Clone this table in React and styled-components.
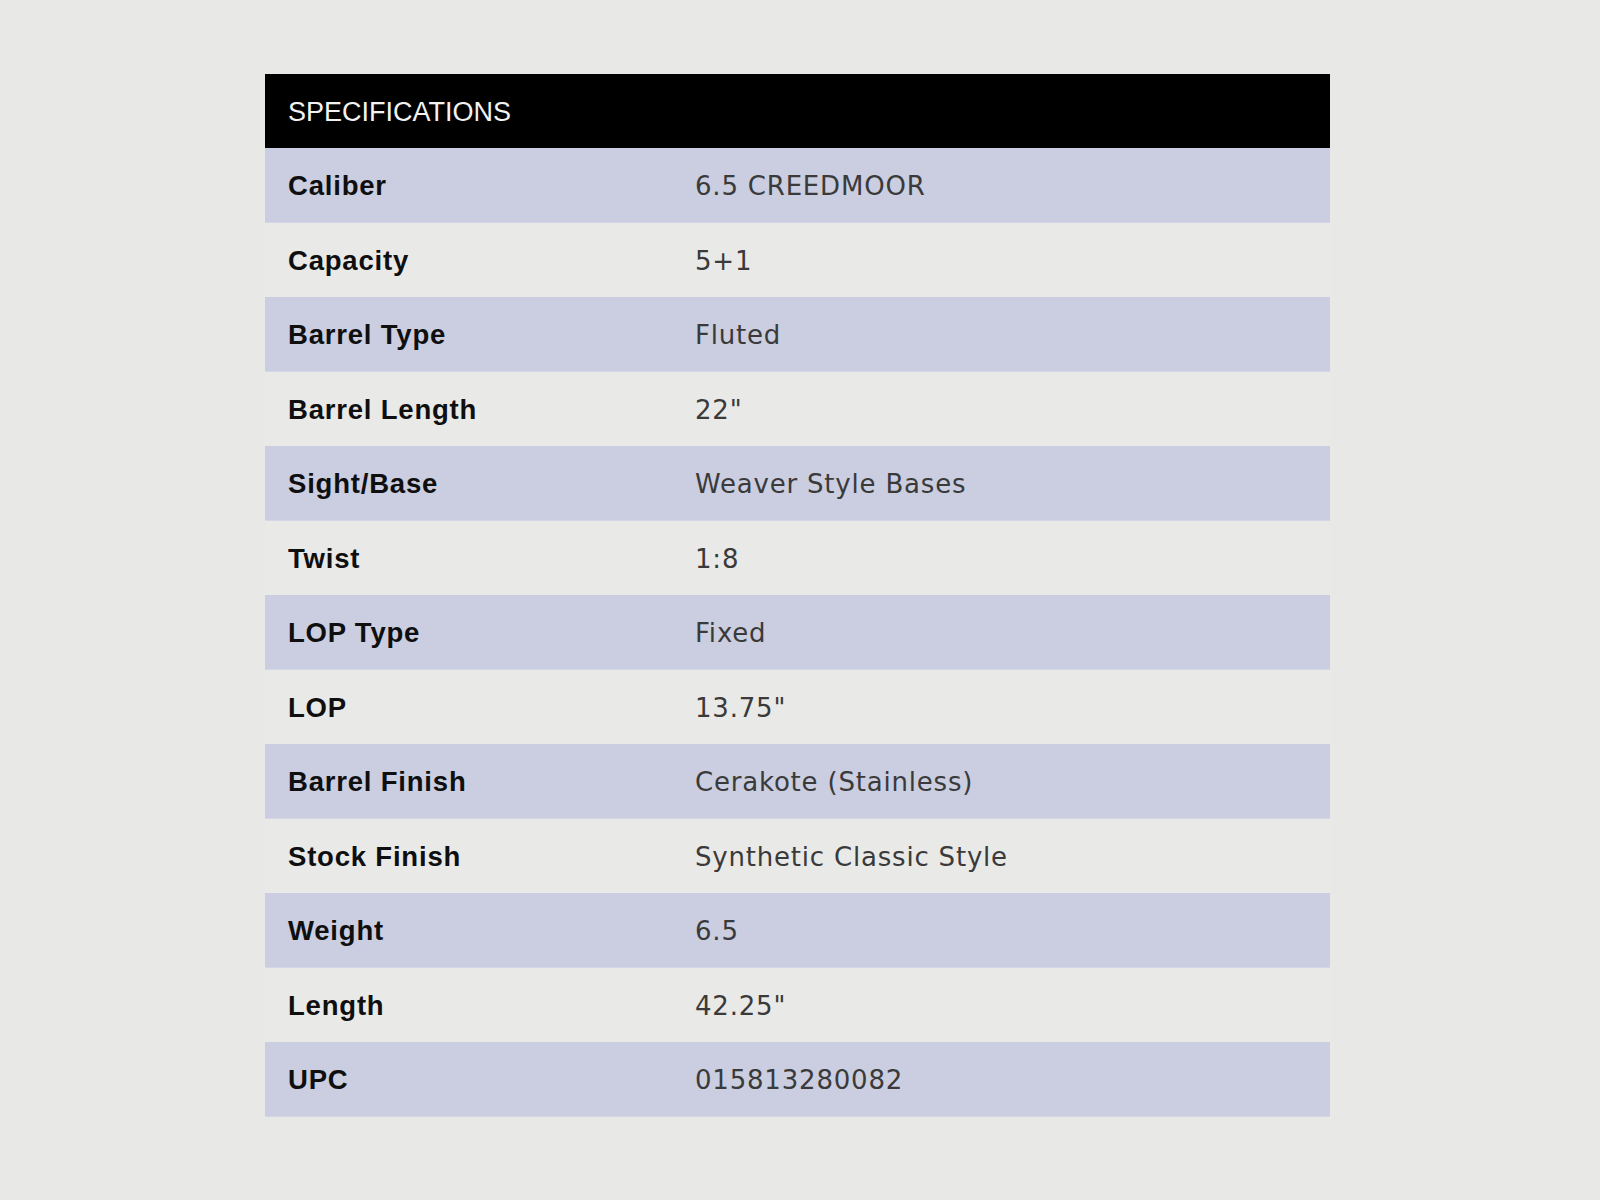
import React from 'react'
import styled, { createGlobalStyle } from 'styled-components'

const specs = [
  ['Caliber', '6.5 CREEDMOOR'],
  ['Capacity', '5+1'],
  ['Barrel Type', 'Fluted'],
  ['Barrel Length', '22"'],
  ['Sight/Base', 'Weaver Style Bases'],
  ['Twist', '1:8'],
  ['LOP Type', 'Fixed'],
  ['LOP', '13.75"'],
  ['Barrel Finish', 'Cerakote (Stainless)'],
  ['Stock Finish', 'Synthetic Classic Style'],
  ['Weight', '6.5'],
  ['Length', '42.25"'],
  ['UPC', '015813280082'],
]

const GlobalStyle = createGlobalStyle`
  html, body {
    margin: 0;
    padding: 0;
    background: #e8e8e7;
  }
  body {
    font-family: "Liberation Sans", Arial, sans-serif;
  }
`

const Page = styled.div`
  min-height: 1200px;
  padding: 74px 0 0 265px;
  box-sizing: border-box;
`

const Table = styled.div`
  width: 1065px;
  display: flex;
  flex-direction: column;
`

const Header = styled.div`
  height: 74px;
  background: #000;
  color: #f2f2f2;
  display: flex;
  align-items: center;
  padding: 2px 0 0 23px;
  box-sizing: border-box;
  font-size: 27px;
`

const Row = styled.div`
  height: 74.5px;
  display: grid;
  grid-template-columns: 407px 1fr;
  align-items: center;
  padding: 3px 0 0 23px;
  background: ${({ $shaded }) => ($shaded ? '#cacee0' : '#e9e9e8')};
  border-bottom: 1px solid ${({ $shaded }) => ($shaded ? '#d3d6e4' : '#e9e9e8')};
  box-sizing: border-box;
`

const Label = styled.span`
  font-weight: 700;
  font-size: 27.5px;
  color: #0f0f0f;
  letter-spacing: 0.8px;
`

const Value = styled.span`
  font-family: "DejaVu Sans", Verdana, sans-serif;
  font-size: 26px;
  color: #3a3a3a;
  letter-spacing: 0.8px;
`

export default function App() {
  return (
    <Page>
      <GlobalStyle />
      <Table>
        <Header>SPECIFICATIONS</Header>
        {specs.map(([label, value], i) => (
          <Row key={label} $shaded={i % 2 === 0}>
            <Label>{label}</Label>
            <Value>{value}</Value>
          </Row>
        ))}
      </Table>
    </Page>
  )
}
